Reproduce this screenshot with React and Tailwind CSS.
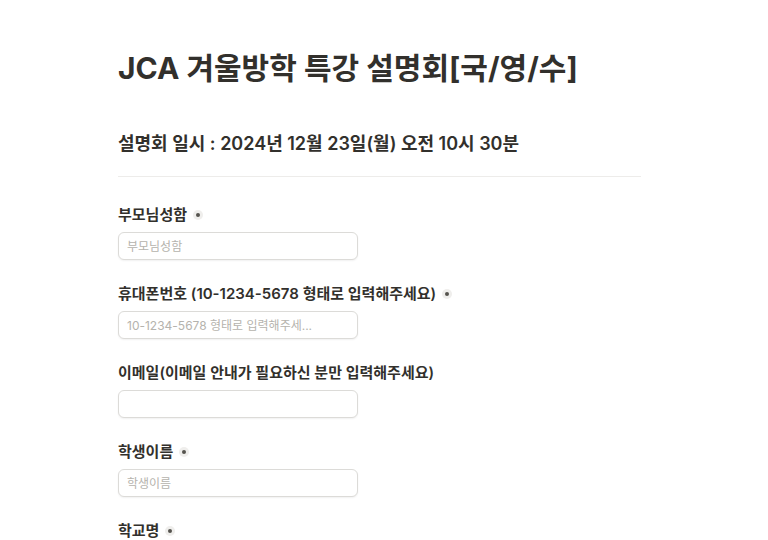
import { useState } from 'react'

const font = { fontFamily: 'Inter, "Noto Sans CJK KR", sans-serif' }

function RequiredDot() {
    return (
        <span className="ml-[6px] inline-flex h-[10px] w-[10px] items-center justify-center rounded-full bg-[#efeeec]">
            <span className="h-[4px] w-[4px] rounded-full bg-[#55534e]" />
        </span>
    )
}

function Field({ label, placeholder, required }) {
    const [value, setValue] = useState("")
    return (
        <div className="flex flex-col">
            <label className="flex h-[22px] items-center text-[15px] font-semibold text-[#32302c]">
                {label}
                {required && <RequiredDot />}
            </label>
            <input
                value={value}
                onChange={(e) => setValue(e.target.value)}
                placeholder={placeholder}
                className="mt-[6px] h-[28px] w-[240px] rounded-[6px] border border-[#dcdbd8] bg-white px-[8px] text-[12px] text-[#32302c] shadow-[0_1px_2px_rgba(0,0,0,0.06)] outline-none placeholder:text-[#b5b3ad]"
                style={font}
            />
        </div>
    )
}

export default function App() {
    const fields = [
        { label: "부모님성함", placeholder: "부모님성함", required: true },
        { label: "휴대폰번호 (10-1234-5678 형태로 입력해주세요)", placeholder: "10-1234-5678 형태로 입력해주세...", required: true },
        { label: "이메일(이메일 안내가 필요하신 분만 입력해주세요)", placeholder: "", required: false },
        { label: "학생이름", placeholder: "학생이름", required: true },
        { label: "학교명", placeholder: "학교명", required: true },
    ]
    return (
        <div className="h-[540px] w-[768px] overflow-hidden bg-white" style={font}>
            <div className="ml-[118px] w-[523px] pt-[48px]">
                <h1 className="text-[30px] font-bold leading-[40px] text-[#32302c]">
                    JCA 겨울방학 특강 설명회[국/영/수]
                </h1>
                <p className="mt-[42px] text-[18px] font-semibold leading-[28px] text-[#32302c]">
                    설명회 일시 : 2024년 12월 23일(월) 오전 10시 30분
                </p>
                <div className="mt-[18px] h-px bg-[#edecea]" />
                <div className="mt-[27px] flex flex-col gap-[23px]">
                    {fields.map((f) => (
                        <Field key={f.label} {...f} />
                    ))}
                </div>
            </div>
        </div>
    )
}
